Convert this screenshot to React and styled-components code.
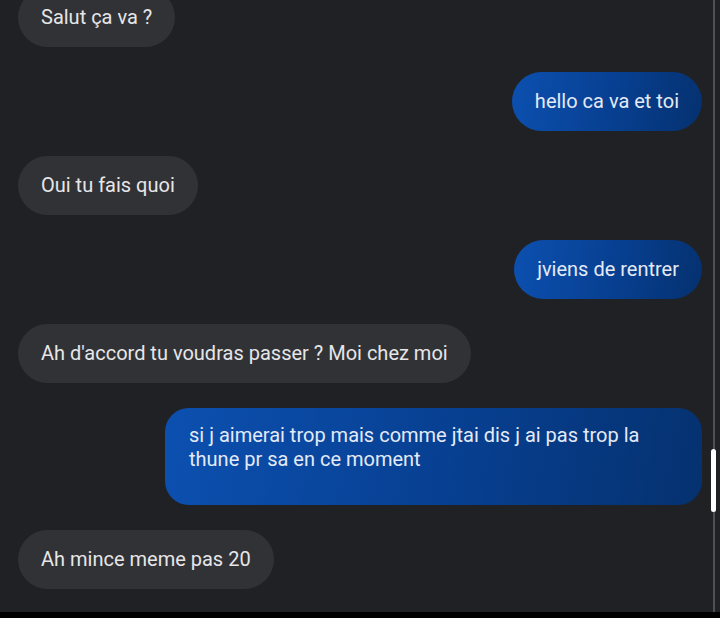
import React from 'react'
import styled, { createGlobalStyle } from 'styled-components';

const GlobalStyle = createGlobalStyle`
    html, body {
        margin: 0;
        padding: 0;
        background: #000;
    }
    body {
        font-family: Roboto, "Noto Sans", "Liberation Sans", sans-serif;
    }
`;

const messages = [
    { from: 'them', text: 'Salut ça va ?' },
    { from: 'me', text: 'hello ca va et toi' },
    { from: 'them', text: 'Oui tu fais quoi' },
    { from: 'me', text: 'jviens de rentrer' },
    { from: 'them', text: "Ah d'accord tu voudras passer ? Moi chez moi" },
    { from: 'me', text: 'si j aimerai trop mais comme jtai dis j ai pas trop la thune pr sa en ce moment', long: true },
    { from: 'them', text: 'Ah mince meme pas 20' },
];

export default function App() {
    return (
        <>
            <GlobalStyle />
            <Screen>
                <Frame>
                    <Conversation>
                        <List>
                            {messages.map((m, i) => (
                                <Row key={i} mine={m.from === 'me'}>
                                    <Bubble mine={m.from === 'me'} long={m.long}>{m.text}</Bubble>
                                </Row>
                            ))}
                        </List>
                    </Conversation>
                    <Track>
                        <Thumb />
                    </Track>
                </Frame>
                <BottomBar />
            </Screen>
        </>
    );
}

const Screen = styled.div`
    width: 720px;
    height: 618px;
    display: flex;
    flex-direction: column;
    overflow: hidden;
`;

const Frame = styled.div`
    flex: 1;
    display: flex;
    background: #202125;
    position: relative;
    overflow: hidden;
`;

const Conversation = styled.div`
    width: 712px;
    padding: 0 10px 0 18px;
    box-sizing: border-box;
`;

const List = styled.div`
    margin-top: -12px;
    display: flex;
    flex-direction: column;
    gap: 25px;
`;

const Row = styled.div`
    display: flex;
    justify-content: ${p => p.mine ? 'flex-end' : 'flex-start'};
`;

const Bubble = styled.div`
    box-sizing: border-box;
    max-width: 537px;
    font-size: 20px;
    line-height: ${p => p.long ? '24px' : '23px'};
    padding: ${p => p.long ? '15px 24px 34px' : '18px 23px'};
    border-radius: ${p => p.long ? '24px' : '30px'};
    color: ${p => p.mine ? '#e4eaf6' : '#e6e6e8'};
    background: ${p => p.mine
        ? 'linear-gradient(100deg, #0c50b0 0%, #073f90 55%, #05316f 100%)'
        : '#313236'};
`;

const Track = styled.div`
    width: 8px;
    display: flex;
    justify-content: flex-start;
    &::before {
        content: '';
        width: 2px;
        margin-left: 1px;
        background: #4f5054;
    }
`;

const Thumb = styled.div`
    position: absolute;
    right: 4px;
    top: 449px;
    width: 5px;
    height: 63px;
    border-radius: 3px;
    background: #ffffff;
`;

const BottomBar = styled.div`
    height: 6px;
    background: #000;
`;
